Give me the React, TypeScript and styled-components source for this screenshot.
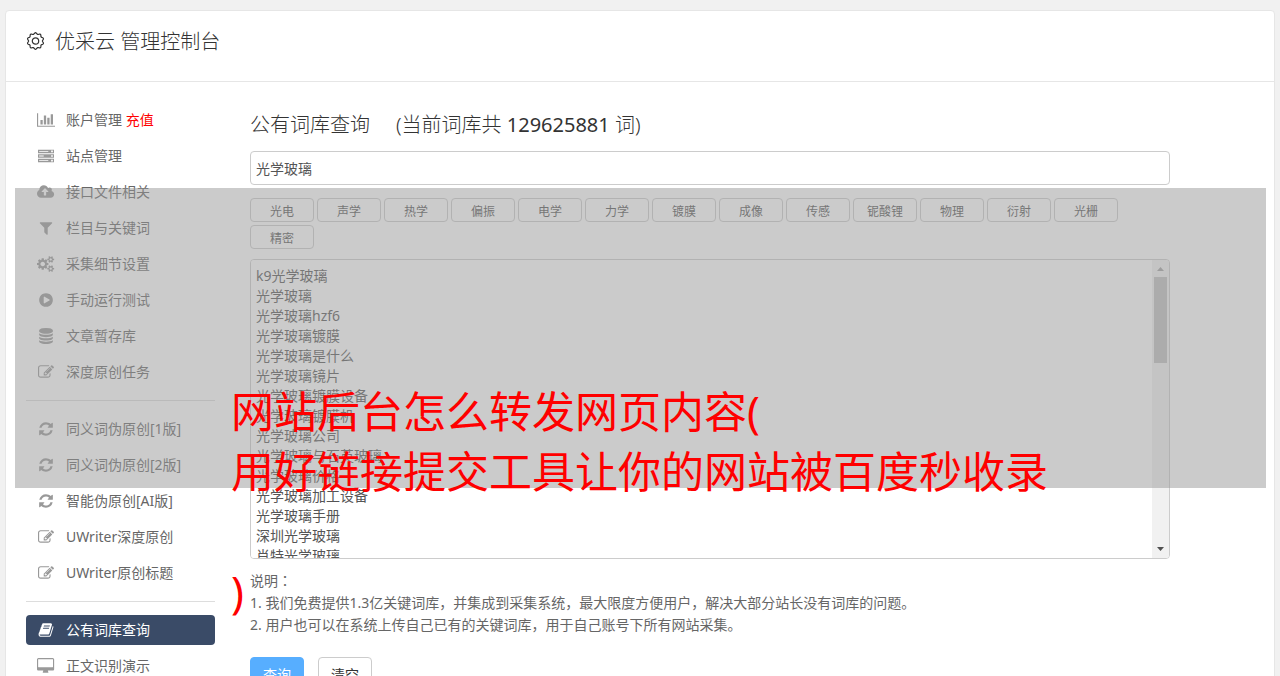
import React from "react";
import styled, { createGlobalStyle, css } from "styled-components";

const GlobalStyle = createGlobalStyle`
  *, *::before, *::after { box-sizing: border-box; }
  html, body { margin: 0; height: 100%; }
  body {
    background: #f1f1f1;
    color: #666;
    font: 14px/20px "Noto Sans", "Noto Sans CJK SC", sans-serif;
    overflow: hidden;
  }
  button, input, textarea { font-family: inherit; }
`;

const Page = styled.div`
  position: relative;
  padding: 10px 5px 0;
`;

const Panel = styled.div`
  background: #fff;
  border: 1px solid #e6e6e6;
  border-radius: 4px;
`;

const Header = styled.header`
  display: flex;
  align-items: center;
  gap: 10px;
  height: 71px;
  padding: 0 20px 8px;
  border-bottom: 1px solid #e6e6e6;
  color: #333;
`;

const Brand = styled.h1`
  margin: 0;
  font-size: 20px;
  font-weight: 300;
  line-height: 30px;
`;

const Body = styled.div`
  display: flex;
  align-items: flex-start;
  gap: 35px;
  padding: 23px 104px 40px 20px;
`;

const Sidebar = styled.nav`
  flex: 0 0 189px;
`;

const NavGroup = styled.ul`
  list-style: none;
  margin: 0;
  padding: 0;
  display: flex;
  flex-direction: column;
  gap: 6px;

  & + & {
    margin-top: 13px;
    padding-top: 13px;
    border-top: 1px solid #ddd;
  }
`;

const NavLink = styled.a<{ $active?: boolean }>`
  display: flex;
  align-items: center;
  gap: 10px;
  height: 30px;
  padding: 0 10px;
  border-radius: 4px;
  color: #666;
  text-decoration: none;
  ${(p) =>
    p.$active &&
    css`
      background: #3a4b67;
      color: #fff;
    `}
`;

const IconSlot = styled.span<{ $active?: boolean }>`
  display: flex;
  justify-content: center;
  width: 20px;
  color: ${(p) => (p.$active ? "#fff" : "#999")};
`;

const Recharge = styled.span`
  color: #f00;
`;

const Main = styled.main`
  flex: 1;
  min-width: 0;
`;

const Title = styled.h2`
  margin: 5px 0 11px;
  font-size: 20px;
  font-weight: 300;
  line-height: 30px;
  color: #333;
  white-space: pre;
`;

const Count = styled.span`
  font-weight: 400;
`;

const Field = styled.input`
  display: block;
  width: 100%;
  height: 34px;
  padding: 0 5px;
  border: 1px solid #ccc;
  border-radius: 4px;
  font-size: 14px;
  color: #555;
  outline: none;
`;

const Tags = styled.div`
  display: flex;
  flex-wrap: wrap;
  gap: 3px;
  margin: 13px 0 10px;
`;

const Tag = styled.button`
  width: 64px;
  height: 24px;
  padding: 4px 0 0;
  border: 1px solid #ccc;
  border-radius: 4px;
  background: #fff;
  color: #555;
  font-size: 12px;
  line-height: 18px;
`;

const ListFrame = styled.div`
  display: flex;
  height: 300px;
  border: 1px solid #ccc;
  border-radius: 4px;
  overflow: hidden;
`;

const WordList = styled.textarea`
  flex: 1;
  min-width: 0;
  padding: 6px 5px;
  border: 0;
  outline: none;
  resize: none;
  overflow: hidden;
  background: #fff;
  color: #555;
  font-size: 14px;
  line-height: 20px;
`;

const ScrollTrack = styled.div`
  flex: 0 0 17px;
  display: flex;
  flex-direction: column;
  align-items: center;
  background: #f1f1f1;
`;

const ScrollArrow = styled.svg<{ $dim?: boolean }>`
  flex: 0 0 17px;
  width: 17px;
  fill: ${(p) => (p.$dim ? "#a3a3a3" : "#505050")};
`;

const ScrollThumb = styled.div`
  width: 13px;
  height: 86px;
  margin-bottom: auto;
  background: #c1c1c1;
`;

const Notes = styled.div`
  margin: 10px 0 21px;
  line-height: 22px;
`;

const NoteLine = styled.p`
  margin: 0;
`;

// The Traditional face sets the full-width colon in the middle of its square.
const MidColon = styled.span`
  font-family: "Noto Sans CJK TC", sans-serif;
`;

const Actions = styled.div`
  display: flex;
  gap: 14px;
`;

const ActionButton = styled.button<{ $primary?: boolean }>`
  width: 54px;
  height: 34px;
  padding: 0;
  border: 1px solid ${(p) => (p.$primary ? "#57aeff" : "#ccc")};
  border-radius: 4px;
  background: ${(p) => (p.$primary ? "#57aeff" : "#fff")};
  color: ${(p) => (p.$primary ? "#fff" : "#333")};
  font-size: 14px;
`;

const Banner = styled.div`
  position: absolute;
  top: 188px;
  left: 15px;
  right: 14px;
  height: 300px;
  padding: 194px 216px 0;
  background: rgba(151, 151, 151, 0.5);
  pointer-events: none;
`;

const BannerText = styled.p`
  margin: 0;
  color: #f00;
  font-size: 43px;
  line-height: 60px;
  white-space: pre;
`;

const ICONS = {
  chart: {
    box: "0 0 2048 1792",
    d: "M640 896v512h-256v-512h256zm384-512v1024h-256v-1024h256zm1024 1152v128h-2048v-1536h128v1408h1920zm-640-896v768h-256v-768h256zm384-384v1152h-256v-1152h256z",
  },
  server: {
    box: "0 0 1792 1792",
    d: "M0 192h1792v384h-1792zM128 336v96h1024v-96zM1472 288v192h192v-192zM0 704h1792v384h-1792zM128 848v96h512v-96zM1472 800v192h192v-192zM0 1216h1792v384h-1792zM128 1360v96h1024v-96zM1472 1312v192h192v-192z",
  },
  upload: {
    box: "0 0 1920 1792",
    d: "M1280 864q0-14-9-23l-352-352q-9-9-23-9t-23 9l-351 351q-10 12-10 24 0 14 9 23t23 9h224v352q0 13 9.5 22.5t22.5 9.5h192q13 0 22.5-9.5t9.5-22.5v-352h224q13 0 22.5-9.5t9.5-22.5zm640 288q0 159-112.5 271.5t-271.5 112.5h-1088q-185 0-316.5-131.5t-131.5-316.5q0-130 70-240t188-165q-2-30-2-43 0-212 150-362t362-150q156 0 285.5 87t188.5 231q71-62 166-62 106 0 181 75t75 181q0 76-41 138 130 31 213.5 135.5t83.5 238.5z",
  },
  filter: {
    box: "0 0 1792 1792",
    d: "M1595 295q17 41-14 70l-493 493v742q0 42-39 59-13 5-25 5-27 0-45-19l-256-256q-19-19-19-45v-486l-493-493q-31-29-14-70 17-39 59-39h1280q42 0 59 39z",
  },
  cogs: {
    box: "0 0 1920 1792",
    d: "M896 896q0-106-75-181t-181-75-181 75-75 181 75 181 181 75 181-75 75-181zm768 512q0-52-38-90t-90-38-90 38-38 90q0 53 37.5 90.5t90.5 37.5 90.5-37.5 37.5-90.5zm0-1024q0-52-38-90t-90-38-90 38-38 90q0 53 37.5 90.5t90.5 37.5 90.5-37.5 37.5-90.5zm-384 421v185q0 10-7 19.5t-16 10.5l-155 24q-11 35-32 76 34 48 90 115 7 11 7 20 0 12-7 19-23 30-82.5 89.5t-78.5 59.5q-11 0-21-7l-115-90q-37 19-77 31-11 108-23 155-7 24-30 24h-186q-11 0-20-7.5t-10-17.5l-23-153q-34-10-75-31l-118 89q-7 7-20 7-11 0-21-8-144-133-144-160 0-9 7-19 10-14 41-53t47-61q-23-44-35-82l-152-24q-10-1-17-9.5t-7-19.5v-185q0-10 7-19.5t16-10.5l155-24q11-35 32-76-34-48-90-115-7-11-7-20 0-12 7-20 22-30 82-89t79-59q11 0 21 7l115 90q34-18 77-32 11-108 23-154 7-24 30-24h186q11 0 20 7.5t10 17.5l23 153q34 10 75 31l118-89q8-7 20-7 11 0 21 8 144 133 144 160 0 8-7 19-12 16-42 54t-45 60q23 48 34 82l152 23q10 2 17 10.5t7 19.5zm640 533v140q0 16-149 31-12 27-30 52 51 113 51 138 0 4-4 7-122 71-124 71-8 0-46-47t-52-68q-20 2-30 2t-30-2q-14 21-52 68t-46 47q-2 0-124-71-4-3-4-7 0-25 51-138-18-25-30-52-149-15-149-31v-140q0-16 149-31 13-29 30-52-51-113-51-138 0-4 4-7 4-2 35-20t59-34 30-16q8 0 46 46.5t52 67.5q20-2 30-2t30 2q51-71 92-112l6-2q4 0 124 70 4 3 4 7 0 25-51 138 17 23 30 52 149 15 149 31zm0-1024v140q0 16-149 31-12 27-30 52 51 113 51 138 0 4-4 7-122 71-124 71-8 0-46-47t-52-68q-20 2-30 2t-30-2q-14 21-52 68t-46 47q-2 0-124-71-4-3-4-7 0-25 51-138-18-25-30-52-149-15-149-31v-140q0-16 149-31 13-29 30-52-51-113-51-138 0-4 4-7 4-2 35-20t59-34 30-16q8 0 46 46.5t52 67.5q20-2 30-2t30 2q51-71 92-112l6-2q4 0 124 70 4 3 4 7 0 25-51 138 17 23 30 52 149 15 149 31z",
  },
  play: {
    box: "0 0 1792 1792",
    d: "M896 128q209 0 385.5 103t279.5 279.5 103 385.5-103 385.5-279.5 279.5-385.5 103-385.5-103-279.5-279.5-103-385.5 103-385.5 279.5-279.5 385.5-103zm384 823q32-18 32-55t-32-55l-544-320q-31-19-64-1-32 19-32 56v640q0 37 32 56 16 8 32 8 17 0 32-9z",
  },
  database: {
    box: "0 0 1792 1792",
    d: "M896 768q237 0 443-43t325-127v170q0 69-103 128t-280 93.5-385 34.5-385-34.5-280-93.5-103-128v-170q119 84 325 127t443 43zm0 768q237 0 443-43t325-127v170q0 69-103 128t-280 93.5-385 34.5-385-34.5-280-93.5-103-128v-170q119 84 325 127t443 43zm0-384q237 0 443-43t325-127v170q0 69-103 128t-280 93.5-385 34.5-385-34.5-280-93.5-103-128v-170q119 84 325 127t443 43zm0-1152q208 0 385 34.5t280 93.5 103 128v128q0 69-103 128t-280 93.5-385 34.5-385-34.5-280-93.5-103-128v-128q0-69 103-128t280-93.5 385-34.5z",
  },
  edit: {
    box: "0 0 1792 1792",
    d: "M888 1184l116-116-152-152-116 116v56h96v96h56zm440-720q-16-16-33 1l-350 350q-17 17-1 33t33-1l350-350q17-17 1-33zm80 594v190q0 119-84.5 203.5t-203.5 84.5h-832q-119 0-203.5-84.5t-84.5-203.5v-832q0-119 84.5-203.5t203.5-84.5h832q63 0 117 25 15 7 18 23 3 17-9 29l-49 49q-14 14-32 8-23-6-45-6h-832q-66 0-113 47t-47 113v832q0 66 47 113t113 47h832q66 0 113-47t47-113v-126q0-13 9-22l64-64q15-15 35-7t20 29zm-96-738l288 288-672 672h-288v-288zm444 132l-92 92-288-288 92-92q28-28 68-28t68 28l152 152q28 28 28 68t-28 68z",
  },
  refresh: {
    box: "0 0 1792 1792",
    d: "M1639 1056q0 5-1 7-64 268-268 434.5t-478 166.5q-146 0-282.5-55t-243.5-157l-129 129q-19 19-45 19t-45-19-19-45v-448q0-26 19-45t45-19h448q26 0 45 19t19 45-19 45l-137 137q71 66 161 102t187 36q134 0 250-65t186-179q11-17 53-117 8-23 30-23h192q13 0 22.5 9.5t9.5 22.5zm25-800v448q0 26-19 45t-45 19h-448q-26 0-45-19t-19-45 19-45l138-138q-148-137-349-137-134 0-250 65t-186 179q-11 17-53 117-8 23-30 23h-199q-13 0-22.5-9.5t-9.5-22.5v-7q65-268 270-434.5t480-166.5q146 0 284 55.5t245 156.5l130-129q19-19 45-19t45 19 19 45z",
  },
  book: {
    box: "0 0 1792 1792",
    d: "M1703 478q40 57 18 129l-275 906q-19 64-76.5 107.5t-122.5 43.5h-923q-77 0-148.5-53.5t-99.5-131.5q-24-67-2-127 0-4 3-27t4-37q1-8-3-21.5t-3-19.5q2-11 8-21t16.5-23.5 16.5-23.5q23-38 45-91.5t30-91.5q3-10 .5-30t-.5-28q3-11 17-28t17-23q21-36 42-92t25-90q1-9-2.5-32t.5-28q4-13 22-30.5t22-22.5q19-26 42.5-84.5t27.5-96.5q1-8-3-25.5t-2-26.5q2-8 9-18t18-23 17-21q8-12 16.5-30.5t15-35 16-36 19.5-32 26.5-23.5 36-11.5 47.5 5.5l-1 3q38-9 51-9h761q74 0 114 56t18 130l-274 906q-36 119-71.5 153.5t-128.5 34.5h-869q-27 0-38 15-11 16-1 43 24 70 144 70h923q29 0 56-15.5t35-41.5l300-987q7-22 5-57 38 15 59 43zm-1064 2q-4 13 2 22.5t20 9.5h608q13 0 25.5-9.5t16.5-22.5l21-64q4-13-2-22.5t-20-9.5h-608q-13 0-25.5 9.5t-16.5 22.5zm-83 256q-4 13 2 22.5t20 9.5h608q13 0 25.5-9.5t16.5-22.5l21-64q4-13-2-22.5t-20-9.5h-608q-13 0-25.5 9.5t-16.5 22.5z",
  },
  desktop: {
    box: "-64 0 1920 1792",
    d: "M1728 992v-832q0-13-9.5-22.5t-22.5-9.5h-1600q-13 0-22.5 9.5t-9.5 22.5v832q0 13 9.5 22.5t22.5 9.5h1600q13 0 22.5-9.5t9.5-22.5zm128-832v1088q0 66-47 113t-113 47h-544q0 37 16 77.5t32 71 16 43.5q0 26-19 45t-45 19h-512q-26 0-45-19t-19-45q0-14 16-44t32-70 16-78h-544q-66 0-113-47t-47-113v-1088q0-66 47-113t113-47h1600q66 0 113 47t47 113z",
  },
};

type IconName = keyof typeof ICONS;

const Glyph = styled.svg`
  display: block;
  height: 16px;
  fill: currentColor;
  fill-rule: evenodd;
`;

function Icon({ name }: { name: IconName }) {
  return (
    <Glyph viewBox={ICONS[name].box} aria-hidden="true">
      <path d={ICONS[name].d} />
    </Glyph>
  );
}

// Outline of a gear with rounded lobes, centred in a 19x20 box.
const LOBES = 10;
const gearPath = (() => {
  const points: string[] = [];
  for (let i = 0; i <= 120; i++) {
    const a = (i / 120) * Math.PI * 2;
    const r = 7.6 + 0.7 * Math.cos(a * LOBES);
    points.push(`${(9.5 + r * Math.sin(a)).toFixed(2)} ${(9 - r * Math.cos(a)).toFixed(2)}`);
  }
  return `M${points.join("L")}Z`;
})();

function GearIcon() {
  return (
    <svg width="19" height="20" viewBox="0 0 19 20" fill="none" stroke="#333" strokeWidth="1.2" aria-hidden="true">
      <path d={gearPath} />
      <circle cx="9.5" cy="9" r="3.2" />
    </svg>
  );
}

interface NavEntry {
  icon: IconName;
  label: string;
  extra?: string;
  active?: boolean;
}

const NAV: NavEntry[][] = [
  [
    { icon: "chart", label: "账户管理", extra: "充值" },
    { icon: "server", label: "站点管理" },
    { icon: "upload", label: "接口文件相关" },
    { icon: "filter", label: "栏目与关键词" },
    { icon: "cogs", label: "采集细节设置" },
    { icon: "play", label: "手动运行测试" },
    { icon: "database", label: "文章暂存库" },
    { icon: "edit", label: "深度原创任务" },
  ],
  [
    { icon: "refresh", label: "同义词伪原创[1版]" },
    { icon: "refresh", label: "同义词伪原创[2版]" },
    { icon: "refresh", label: "智能伪原创[AI版]" },
    { icon: "edit", label: "UWriter深度原创" },
    { icon: "edit", label: "UWriter原创标题" },
  ],
  [
    { icon: "book", label: "公有词库查询", active: true },
    { icon: "desktop", label: "正文识别演示" },
  ],
];

const TAGS = ["光电", "声学", "热学", "偏振", "电学", "力学", "镀膜", "成像", "传感", "铌酸锂", "物理", "衍射", "光栅", "精密"];

const WORDS = [
  "k9光学玻璃",
  "光学玻璃",
  "光学玻璃hzf6",
  "光学玻璃镀膜",
  "光学玻璃是什么",
  "光学玻璃镜片",
  "光学玻璃镀膜设备",
  "光学玻璃镀膜机",
  "光学玻璃公司",
  "光学玻璃与石英玻璃",
  "光学玻璃价格",
  "光学玻璃加工设备",
  "光学玻璃手册",
  "深圳光学玻璃",
  "肖特光学玻璃",
].join("\n");

export default function App() {
  return (
    <>
      <GlobalStyle />
      <Page>
        <Panel>
          <Header>
            <GearIcon />
            <Brand>优采云 管理控制台</Brand>
          </Header>
          <Body>
            <Sidebar>
              {NAV.map((group, i) => (
                <NavGroup key={i}>
                  {group.map((item) => (
                    <li key={item.label}>
                      <NavLink href="#" $active={item.active}>
                        <IconSlot $active={item.active}>
                          <Icon name={item.icon} />
                        </IconSlot>
                        <span>
                          {item.label}
                          {item.extra && <Recharge> {item.extra}</Recharge>}
                        </span>
                      </NavLink>
                    </li>
                  ))}
                </NavGroup>
              ))}
            </Sidebar>
            <Main>
              <Title>
                {"公有词库查询\u00a0\u00a0\u00a0\u00a0 (当前词库共 "}
                <Count>129625881</Count>
                {" 词)"}
              </Title>
              <Field type="text" defaultValue="光学玻璃" aria-label="关键词" />
              <Tags>
                {TAGS.map((tag) => (
                  <Tag key={tag} type="button">
                    {tag}
                  </Tag>
                ))}
              </Tags>
              <ListFrame>
                <WordList defaultValue={WORDS} aria-label="词库" />
                <ScrollTrack>
                  <ScrollArrow $dim viewBox="0 0 17 17">
                    <path d="M5 11L8.500 7L12 11Z" />
                  </ScrollArrow>
                  <ScrollThumb />
                  <ScrollArrow viewBox="0 0 17 17">
                    <path d="M5 6L12 6L8.500 10Z" />
                  </ScrollArrow>
                </ScrollTrack>
              </ListFrame>
              <Notes>
                <NoteLine>
                  说明<MidColon>：</MidColon>
                </NoteLine>
                <NoteLine>1. 我们免费提供1.3亿关键词库，并集成到采集系统，最大限度方便用户，解决大部分站长没有词库的问题。</NoteLine>
                <NoteLine>2. 用户也可以在系统上传自己已有的关键词库，用于自己账号下所有网站采集。</NoteLine>
              </Notes>
              <Actions>
                <ActionButton type="button" $primary>
                  查询
                </ActionButton>
                <ActionButton type="button">清空</ActionButton>
              </Actions>
            </Main>
          </Body>
        </Panel>
        <Banner>
          <BannerText>{"网站后台怎么转发网页内容(\n用好链接提交工具让你的网站被百度秒收录\n\n)"}</BannerText>
        </Banner>
      </Page>
    </>
  );
}
